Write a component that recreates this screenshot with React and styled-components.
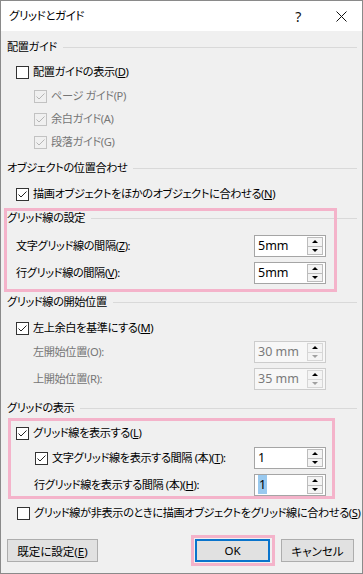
import React from "react";
import styled, { createGlobalStyle } from "styled-components";

const Global = createGlobalStyle`
  html, body { margin: 0; padding: 0; background: #fff; }
  body {
    font-family: "Noto Sans", "Noto Sans CJK JP", sans-serif;
    font-size: 11.2px;
    letter-spacing: -0.4px;
    color: #000;
    font-feature-settings: "palt";
  }
  * { box-sizing: border-box; }
`;

const Window = styled.div`
  width: 363px;
  height: 574px;
  border: 1px solid #8a8a8a;
  background: #f0f0f0;
  display: flex;
  flex-direction: column;
  overflow: hidden;
`;

const TitleBar = styled.div`
  height: 30px;
  flex: none;
  background: #fff;
  display: flex;
  align-items: center;
  padding-left: 8px;
`;

const Title = styled.div`
  flex: 1;
  font-size: 11.5px;
  line-height: 1;
`;

const TitleButton = styled.div`
  width: ${(p) => p.$w}px;
  height: 30px;
  display: flex;
  align-items: center;
  justify-content: center;
  font-size: 14px;
  color: #111;
`;

const Content = styled.div`
  display: flex;
  flex-direction: column;
  padding: 0 5px 0 6px;
`;

const Row = styled.div`
  height: 22px;
  flex: none;
  display: flex;
  align-items: center;
  margin-top: ${(p) => p.$mt || 0}px;
  padding-left: ${(p) => p.$indent || 0}px;
  padding-right: ${(p) => p.$pr || 0}px;
  color: ${(p) => (p.$disabled ? "#767676" : "#000")};
  white-space: nowrap;
`;

const HeaderLine = styled.div`
  flex: 1;
  height: 1px;
  background: #d9d9d9;
  margin-left: 6px;
`;

const Label = styled.span`
  flex: ${(p) => (p.$grow ? 1 : "none")};
  margin-left: ${(p) => p.$ml || 0}px;
  line-height: 1;
`;

const Box = styled.span`
  width: 13px;
  height: 13px;
  flex: none;
  border: 1px solid ${(p) => (p.$disabled ? "#c2c2c2" : "#333")};
  background: ${(p) => (p.$disabled ? "transparent" : "#fff")};
  display: flex;
  align-items: center;
  justify-content: center;
`;

const Check = ({ checked, disabled }) => (
  <Box $disabled={disabled}>
    {checked && (
      <svg width="11" height="11" viewBox="0 0 11 11">
        <polyline
          points="1.5,5.5 4,8 9.5,2.5"
          fill="none"
          stroke={disabled ? "#b5b5b5" : "#222"}
          strokeWidth="1"
        />
      </svg>
    )}
  </Box>
);

const SpinBox = styled.div`
  width: 72px;
  height: 22px;
  flex: none;
  border: 1px solid ${(p) => (p.$disabled ? "#cccccc" : "#a5a5a5")};
  background: ${(p) => (p.$disabled ? "#f7f7f7" : "#fff")};
  display: flex;
  align-items: center;
`;

const SpinValue = styled.div`
  flex: 1;
  padding-left: 3px;
  font-size: 12.5px;
  letter-spacing: 0;
  color: ${(p) => (p.$disabled ? "#7a7a7a" : "#000")};
  line-height: 1;
`;

const Selected = styled.span`
  background: #99c9ef;
  padding: 1px 1px;
`;

const Spinner = styled.div`
  width: 16px;
  height: 18px;
  margin-right: 2px;
  display: flex;
  flex-direction: column;
`;

const SpinButton = styled.div`
  flex: 1;
  border: 1px solid ${(p) => (p.$disabled ? "#d6d6d6" : "#bcbcbc")};
  background: #f4f4f4;
  display: flex;
  align-items: center;
  justify-content: center;
  & + & { border-top: none; }
`;

const Arrow = styled.span`
  width: 0;
  height: 0;
  border-left: 3px solid transparent;
  border-right: 3px solid transparent;
  ${(p) =>
    p.$up
      ? `border-bottom: 3px solid ${p.$color};`
      : `border-top: 3px solid ${p.$color};`}
`;

const Spin = ({ value, disabled, selected }) => (
  <SpinBox $disabled={disabled}>
    <SpinValue $disabled={disabled}>
      {selected ? <Selected>{value}</Selected> : value}
    </SpinValue>
    <Spinner>
      <SpinButton $disabled={disabled}>
        <Arrow $up $color="#000" />
      </SpinButton>
      <SpinButton $disabled={disabled}>
        <Arrow $color={disabled ? "#a0a0a0" : "#000"} />
      </SpinButton>
    </Spinner>
  </SpinBox>
);

const Group = styled.div`
  position: relative;
  display: flex;
  flex-direction: column;
  margin-top: ${(p) => p.$mt || 0}px;
  &::after {
    content: "";
    position: absolute;
    inset: ${(p) => p.$inset};
    border: 3px solid #f4b3ca;
    pointer-events: none;
  }
`;

const ButtonRow = styled.div`
  display: flex;
  align-items: center;
  margin-top: 15px;
  padding-right: 3px;
`;

const Button = styled.button`
  height: 23px;
  width: ${(p) => p.$w}px;
  font: inherit;
  font-size: 11.5px;
  color: #000;
  background: #e1e1e1;
  border: ${(p) => (p.$primary ? "2px solid #0a74cc" : "1px solid #adadad")};
  padding: 0;
  margin-left: ${(p) => p.$ml || 0}px;
  position: relative;
  ${(p) =>
    p.$highlight
      ? `&::after {
    content: "";
    position: absolute;
    inset: -6px -7px -6px -6px;
    border: 3px solid #f4b3ca;
  }`
      : ""}
`;

const Spacer = styled.div`
  flex: 1;
`;

const Header = ({ children, mt }) => (
  <Row $mt={mt}>
    <Label>{children}</Label>
    <HeaderLine />
  </Row>
);

export default function App() {
  return (
    <>
      <Global />
      <Window>
        <TitleBar>
          <Title>グリッドとガイド</Title>
          <TitleButton $w={46}>?</TitleButton>
          <TitleButton $w={41}>
            <svg width="11" height="11" viewBox="0 0 11 11">
              <path d="M0.5 0.5 L10.5 10.5 M10.5 0.5 L0.5 10.5" stroke="#111" strokeWidth="1" />
            </svg>
          </TitleButton>
        </TitleBar>
        <Content>
          <Header mt={5}>配置ガイド</Header>
          <Row $mt={3} $indent={9}>
            <Check />
            <Label $ml={4}>配置ガイドの表示(<u>D</u>)</Label>
          </Row>
          <Row $mt={2} $indent={27} $disabled>
            <Check checked disabled />
            <Label $ml={4}>ページ ガイド(P)</Label>
          </Row>
          <Row $mt={1} $indent={27} $disabled>
            <Check checked disabled />
            <Label $ml={4}>余白ガイド(A)</Label>
          </Row>
          <Row $mt={1} $indent={27} $disabled>
            <Check checked disabled />
            <Label $ml={4}>段落ガイド(G)</Label>
          </Row>

          <Header mt={4}>オブジェクトの位置合わせ</Header>
          <Row $mt={4} $indent={9}>
            <Check checked />
            <Label $ml={4}>描画オブジェクトをほかのオブジェクトに合わせる(<u>N</u>)</Label>
          </Row>

          <Group $mt={2} $inset="1px 20px -8px -3px">
            <Header>グリッド線の設定</Header>
            <Row $mt={6} $indent={9} $pr={31}>
              <Label $grow>文字グリッド線の間隔(<u>Z</u>):</Label>
              <Spin value="5mm" />
            </Row>
            <Row $mt={5} $indent={9} $pr={31}>
              <Label $grow>行グリッド線の間隔(<u>V</u>):</Label>
              <Spin value="5mm" />
            </Row>
          </Group>

          <Header mt={7}>グリッド線の開始位置</Header>
          <Row $mt={4} $indent={9}>
            <Check checked />
            <Label $ml={4}>左上余白を基準にする(<u>M</u>)</Label>
          </Row>
          <Row $mt={2} $indent={26} $pr={31} $disabled>
            <Label $grow>左開始位置(O):</Label>
            <Spin value="30 mm" disabled />
          </Row>
          <Row $mt={5} $indent={26} $pr={31} $disabled>
            <Label $grow>上開始位置(R):</Label>
            <Spin value="35 mm" disabled />
          </Row>

          <Header mt={7}>グリッドの表示</Header>
          <Group $mt={3} $inset="-4px 22px -3px 1px">
            <Row $indent={9}>
              <Check checked />
              <Label $ml={4}>グリッド線を表示する(<u>L</u>)</Label>
            </Row>
            <Row $mt={3} $indent={28} $pr={31}>
              <Check checked />
              <Label $ml={4} $grow>文字グリッド線を表示する間隔 (本)(<u>T</u>):</Label>
              <Spin value="1" />
            </Row>
            <Row $mt={5} $indent={27} $pr={31}>
              <Label $grow>行グリッド線を表示する間隔 (本)(<u>H</u>):</Label>
              <Spin value="1" selected />
            </Row>
          </Group>
          <Row $mt={6} $indent={10}>
            <Check />
            <Label $ml={4}>グリッド線が非表示のときに描画オブジェクトをグリッド線に合わせる(<u>S</u>)</Label>
          </Row>

          <ButtonRow>
            <Button $w={91}>既定に設定(<u>E</u>)</Button>
            <Spacer />
            <Button $w={75} $primary $highlight>OK</Button>
            <Button $w={73} $ml={11}>キャンセル</Button>
          </ButtonRow>
        </Content>
      </Window>
    </>
  );
}
